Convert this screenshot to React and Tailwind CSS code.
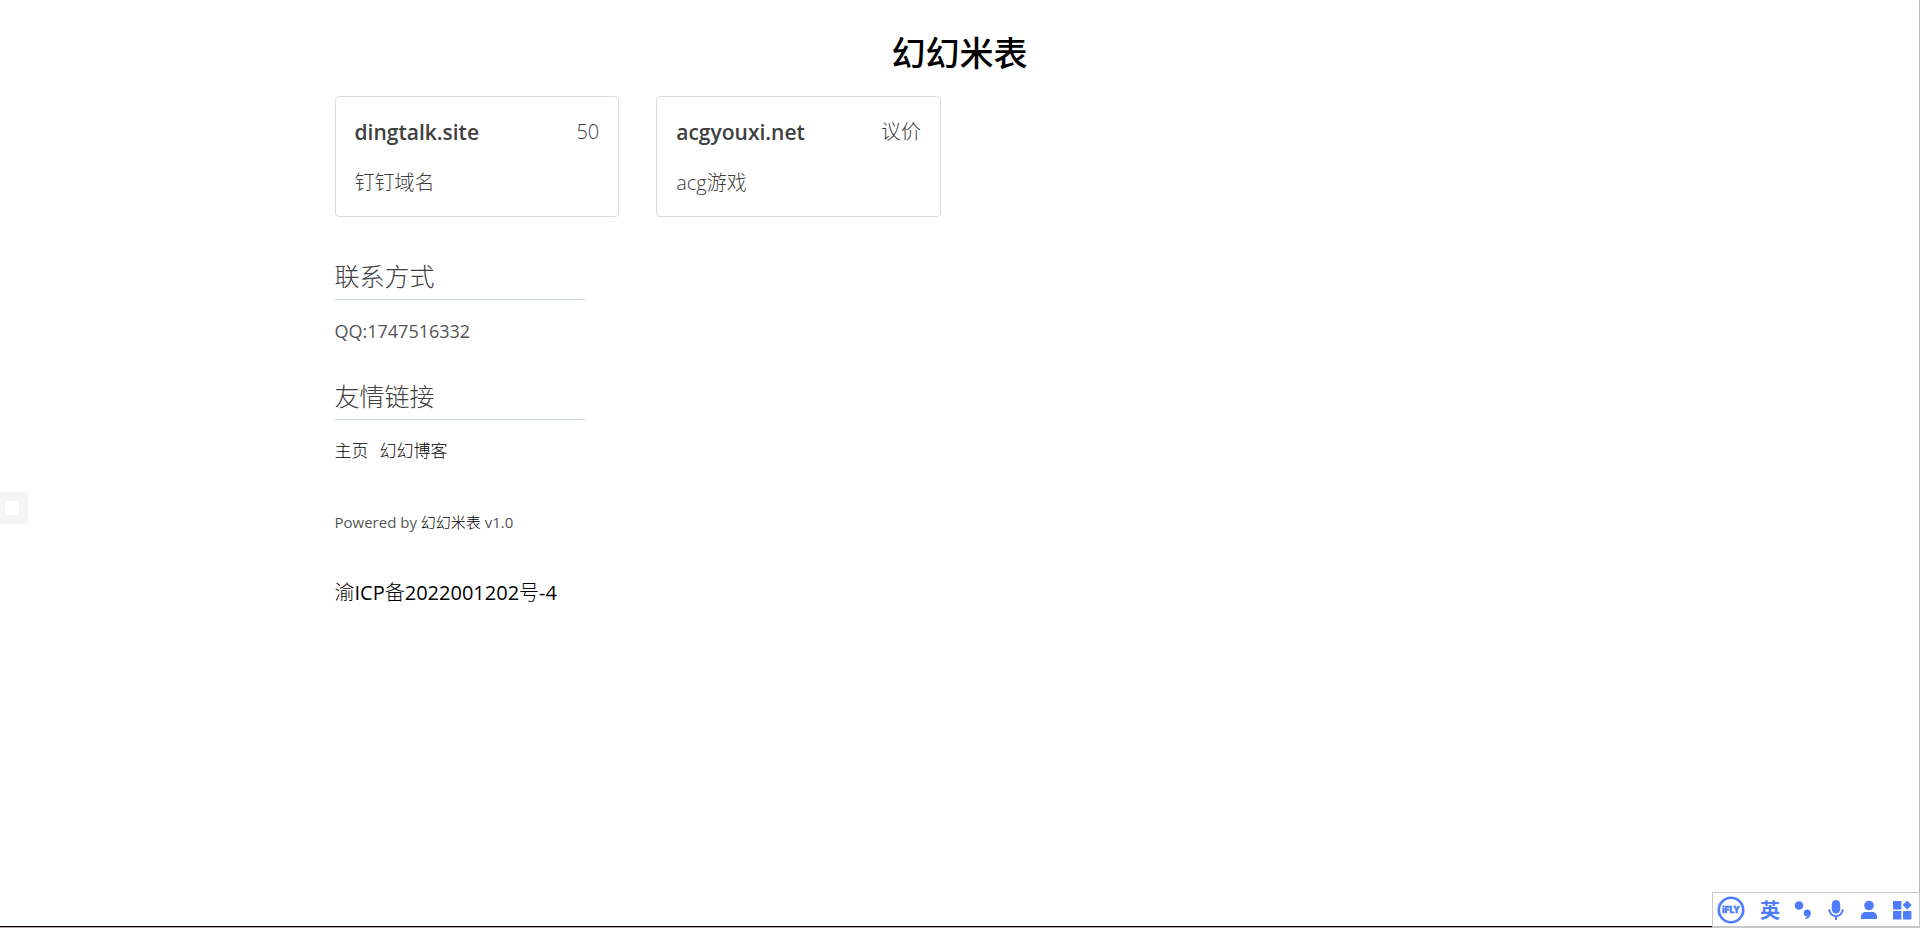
import React from "react";

const domains = [
  { name: "dingtalk.site", price: "50", note: "钉钉域名" },
  { name: "acgyouxi.net", price: "议价", note: "acg游戏" },
];

function Card({ name, price, note }) {
  return (
    <article className="h-[121px] rounded border border-[#dcdcdc] px-[19px] pt-[19px] text-xl leading-8 text-[#404040]">
      <div className="flex items-center justify-between">
        <h2 className="text-[21px] font-semibold">{name}</h2>
        <span className="font-light">{price}</span>
      </div>
      <p className="mt-[19px] font-light">{note}</p>
    </article>
  );
}

function Heading({ children }) {
  return (
    <h2 className="w-[250px] border-b border-[#cbdcdf] pb-[3px] text-[25px] leading-10 text-[#404040]">
      {children}
    </h2>
  );
}

function InputBar() {
  return (
    <div className="fixed right-0 bottom-0 flex h-9 w-[208px] items-center border border-b-2 border-[#c8c8c8] bg-white text-[#4d7cfe]">
      <button type="button" aria-label="iFLY" className="ml-1">
        <svg width="28" height="28" viewBox="0 0 28 28" className="block">
          <circle cx="14" cy="14" r="12.2" fill="none" stroke="currentColor" strokeWidth="2.6" />
          <text x="14" y="17.2" textAnchor="middle" fontFamily="Inter, sans-serif" fontWeight="900" fontSize="8.600" fill="currentColor" stroke="currentColor" strokeWidth="0.4">iFLY</text>
        </svg>
      </button>
      <button type="button" className="ml-[15px] font-['Noto_Sans_CJK_SC',sans-serif] text-[20px] leading-7 font-bold">英</button>
      <button type="button" aria-label="Punctuation" className="ml-[13px]">
        <svg width="20" height="20" viewBox="0 0 20 20" className="block" fill="currentColor">
          <circle cx="6" cy="5.500" r="4.300" />
          <circle cx="14.200" cy="13" r="3.500" />
          <path d="M17.700 12.800c.2 3.400-1.800 5.800-5.200 6.400v-1.600c1.400-.4 2.200-1.200 2.400-2.400z" />
        </svg>
      </button>
      <button type="button" aria-label="Voice" className="ml-[13px]">
        <svg width="20" height="20" viewBox="0 0 20 20" className="block">
          <rect x="5.800" y="0" width="8.400" height="13.500" rx="4.200" fill="currentColor" />
          <path d="M3.200 9.300a6.800 6.800 0 0 0 13.600 0M10 16.300V20" fill="none" stroke="currentColor" strokeWidth="2" />
        </svg>
      </button>
      <button type="button" aria-label="Account" className="ml-[13px]">
        <svg width="20" height="20" viewBox="0 0 20 20" className="block" fill="currentColor">
          <circle cx="10" cy="5.500" r="4.800" />
          <path d="M2 19V17c0-3.500 2-5 5-5h6c3 0 5 1.500 5 5v2z" />
        </svg>
      </button>
      <button type="button" aria-label="Toolbox" className="ml-[13px]">
        <svg width="20" height="20" viewBox="0 0 20 20" className="block" fill="currentColor">
          <rect x="1" y="1" width="8.400" height="8.400" rx="0.600" />
          <rect x="1" y="11" width="8.400" height="8.400" rx="0.600" />
          <rect x="11" y="11" width="8.400" height="8.400" rx="0.600" />
          <path d="M15.200 0.500l4.500 4.500-4.500 4.500-4.500-4.500z" />
        </svg>
      </button>
    </div>
  );
}

export default function App() {
  return (
    <div className="flex min-h-screen flex-col border-r border-b border-r-[#b8b8b8] border-b-[#b5a9ad] bg-white font-['Open_Sans','Noto_Sans_CJK_SC_Light','Noto_Sans_CJK_SC',sans-serif] font-normal">
      <div className="grow border-b border-black">
        <main className="mx-auto max-w-[1250px] pt-[27px]">
          <h1 className="text-center font-['Noto_Sans_CJK_SC',sans-serif] text-[34px] leading-[50px] font-medium text-black">幻幻米表</h1>
          <section className="mt-[19px] grid grid-cols-4 gap-[37px]">
            {domains.map((d) => (
              <Card key={d.name} {...d} />
            ))}
          </section>
          <section className="mt-[39px] text-[#404040]">
            <Heading>联系方式</Heading>
            <p className="mt-[15px] text-[18px] leading-8 text-[#555555]">QQ:1747516332</p>
          </section>
          <section className="mt-[29px]">
            <Heading>友情链接</Heading>
            <nav className="mt-[15px] flex gap-[11px] text-[17px] leading-8 text-black">
              <a href="#home">主页</a>
              <a href="#blog">幻幻博客</a>
            </nav>
          </section>
          <footer>
            <p className="mt-[39px] text-[15px] leading-8 text-[#555555]">
              Powered by <a href="#mibiao" className="text-black">幻幻米表</a> v1.0
            </p>
            <p className="mt-[39px] text-xl leading-8 text-black">
              <a href="#icp">渝ICP备2022001202号-4</a>
            </p>
          </footer>
        </main>
      </div>
      <aside className="fixed top-[492px] left-0 h-8 w-7 rounded-br bg-[#f5f5f5] pt-[9px] pl-[5px]">
        <button type="button" aria-label="Open panel" className="block h-[14px] w-[14px] rounded-xs bg-white" />
      </aside>
      <InputBar />
    </div>
  );
}
